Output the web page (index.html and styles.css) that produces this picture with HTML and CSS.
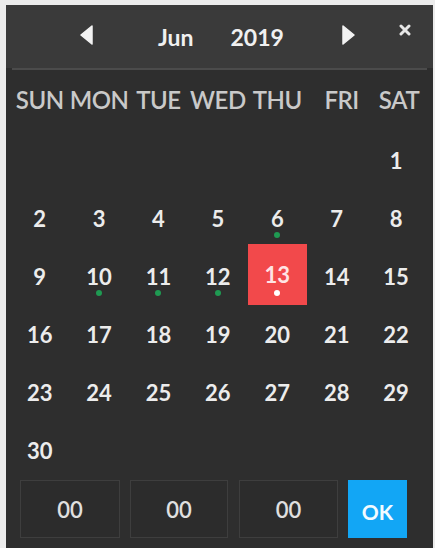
FILE: index.html
```html
<!DOCTYPE html>
<html>
<head>
<meta charset="utf-8">
<link rel="stylesheet" href="styles.css">
</head>
<body>
<div class="picker">
  <div class="header">
    <button class="nav prev" aria-label="Previous">
      <svg width="13" height="20" viewBox="0 0 13 20"><path d="M12 1 L1 10 L12 19 Z" fill="#f2f2f2" stroke="#f2f2f2" stroke-width="1.5" stroke-linejoin="round"/></svg>
    </button>
    <span class="month">Jun</span>
    <span class="year">2019</span>
    <button class="nav next" aria-label="Next">
      <svg width="13" height="20" viewBox="0 0 13 20"><path d="M1 1 L12 10 L1 19 Z" fill="#f2f2f2" stroke="#f2f2f2" stroke-width="1.5" stroke-linejoin="round"/></svg>
    </button>
    <button class="close" aria-label="Close">
      <svg width="12" height="12" viewBox="0 0 12 12"><path d="M2 2 L10 10 M10 2 L2 10" stroke="#e6e6e6" stroke-width="3" stroke-linecap="round"/></svg>
    </button>
  </div>
  <div class="sep"></div>
  <div class="grid">
    <div class="wd">SUN</div><div class="wd">MON</div><div class="wd">TUE</div><div class="wd">WED</div><div class="wd">THU</div><div class="wd">FRI</div><div class="wd">SAT</div>

    <div class="day"></div><div class="day"></div><div class="day"></div><div class="day"></div><div class="day"></div><div class="day"></div><div class="day">1</div>
    <div class="day">2</div><div class="day">3</div><div class="day">4</div><div class="day">5</div><div class="day dot">6</div><div class="day">7</div><div class="day">8</div>
    <div class="day">9</div><div class="day dot">10</div><div class="day dot">11</div><div class="day dot">12</div><div class="day dot sel">13</div><div class="day">14</div><div class="day">15</div>
    <div class="day">16</div><div class="day">17</div><div class="day">18</div><div class="day">19</div><div class="day">20</div><div class="day">21</div><div class="day">22</div>
    <div class="day">23</div><div class="day">24</div><div class="day">25</div><div class="day">26</div><div class="day">27</div><div class="day">28</div><div class="day">29</div>
    <div class="day">30</div>
  </div>
  <div class="time">
    <div class="tbox t1">00</div>
    <div class="tbox t2">00</div>
    <div class="tbox t3">00</div>
    <button class="ok">OK</button>
  </div>
</div>
</body>
</html>
```
FILE: styles.css
```css
html, body {
  margin: 0;
  padding: 0;
  background: #ececec;
}
body {
  width: 435px;
  height: 548px;
  overflow: hidden;
  font-family: Lato, "Open Sans", "Liberation Sans", sans-serif;
}
.picker {
  margin: 5px 2px 0 6px;
  height: 543px;
  background: #2e2e2e;
  display: flex;
  flex-direction: column;
}
.header {
  height: 63px;
  background: #3a3a3a;
  display: flex;
  align-items: center;
  position: relative;
  color: #f0f0f0;
  font-weight: 700;
  font-size: 23px;
}
button {
  background: none;
  border: 0;
  padding: 0;
  margin: 0;
  font-family: inherit;
  cursor: pointer;
}
.nav {
  display: flex;
  width: 13px;
  height: 20px;
}
.prev { margin-left: 74px; margin-top: -4px; }
.month { margin-left: 65px; margin-top: 0; }
.year { margin-left: 37px; margin-top: 0; }
.next { margin-left: 58px; margin-top: -4px; }
.close {
  display: flex;
  margin-left: 44px;
  margin-top: -14px;
}
.sep {
  height: 2px;
  background: #4b4b4b;
  margin: 0 6px;
}
.grid {
  display: grid;
  grid-template-columns: repeat(7, 59.4px);
  grid-template-rows: 58px repeat(6, 58px);
  row-gap: 0;
  padding-left: 4px;
  margin-top: 0;
}
.wd {
  display: flex;
  align-items: center;
  justify-content: center;
  font-size: 24px;
  font-weight: 600;
  color: #c9c9c9;
  letter-spacing: -0.5px;
  white-space: nowrap;
  margin-bottom: 0;
  padding-bottom: 0;
  height: 56px;
  margin-top: 1px;
}
.grid .wd:nth-child(6) { padding-left: 10px; }
.grid .wd:nth-child(7) { padding-left: 6px; }
.grid { grid-template-rows: 61px repeat(6, 58px); }
.day {
  position: relative;
  display: flex;
  align-items: center;
  justify-content: center;
  font-size: 22px;
  font-weight: 700;
  color: #ececec;
}
.dot::after {
  content: "";
  position: absolute;
  left: 50%;
  top: 50%;
  width: 6px;
  height: 6px;
  margin-left: -3px;
  margin-top: 14px;
  border-radius: 50%;
  background: #1f9a52;
}
.sel {
  background: #f2494b;
  color: #ffe4e4;
  margin-top: -3px;
}
.sel.dot::after {
  background: #ffffff;
  margin-top: 15px;
}
.time {
  display: flex;
  align-items: center;
  padding-left: 14px;
  margin-top: 1px;
}
.tbox {
  height: 56px;
  border: 1px solid #3e3e3e;
  background: #2c2c2c;
  display: flex;
  align-items: center;
  justify-content: center;
  color: #e0e0e0;
  font-size: 22px;
  font-weight: 600;
  box-sizing: content-box;
}
.t1 { width: 98px; }
.t2 { width: 96px; margin-left: 10px; }
.t3 { width: 97px; margin-left: 11px; }
.ok {
  width: 59px;
  height: 58px;
  margin-left: 10px;
  background: #12a6f5;
  color: #f2fbff;
  font-size: 21px;
  font-weight: 700;
  display: flex;
  align-items: center;
  justify-content: center;
  padding-top: 4px;
}
```
